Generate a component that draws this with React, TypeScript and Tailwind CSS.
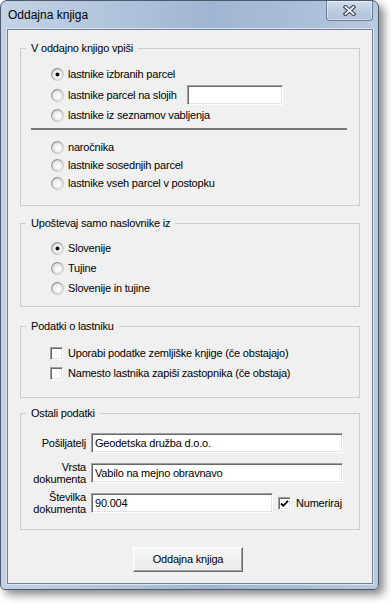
import React from "react"

const Radio = ({ checked }: { checked?: boolean }) => (
  <svg width="13" height="13" viewBox="0 0 13 13" className="shrink-0">
    <defs>
      <linearGradient id="rb" x1="0" y1="0" x2="1" y2="1">
        <stop offset="0" stopColor="#7d7d7d" />
        <stop offset="1" stopColor="#e2e2e2" />
      </linearGradient>
      <radialGradient id="rf" cx="0.6" cy="0.6" r="0.6">
        <stop offset="0" stopColor="#ffffff" />
        <stop offset="1" stopColor="#e4e4e4" />
      </radialGradient>
    </defs>
    <circle cx="6.5" cy="6.5" r="5.8" fill="url(#rf)" stroke="url(#rb)" strokeWidth="1.2" />
    <circle cx="6.5" cy="6.5" r="4.6" fill="none" stroke="#d6d6d6" strokeWidth="0.6" />
    {checked && <circle cx="6.5" cy="6.5" r="2" fill="#111" />}
  </svg>
)

const Check = ({ checked }: { checked?: boolean }) => (
  <div className="w-[13px] h-[13px] shrink-0 bg-white border border-t-[#a0a0a0] border-l-[#a0a0a0] border-r-white border-b-white shadow-[inset_1px_1px_0_#696969,inset_-1px_-1px_0_#e3e3e3] flex items-center justify-center">
    {checked && (
      <svg width="9" height="9" viewBox="0 0 9 9">
        <path d="M1 4.5 L3.3 6.8 L8 1.8" fill="none" stroke="#000" strokeWidth="1.8" />
      </svg>
    )}
  </div>
)

const field =
  "h-[20px] bg-white border border-t-[#a0a0a0] border-l-[#a0a0a0] border-r-white border-b-white shadow-[inset_1px_1px_0_#696969,inset_-1px_-1px_0_#e3e3e3] pl-[3px] flex items-center"

const Group = ({ title, className, children }: { title: string; className: string; children: React.ReactNode }) => (
  <fieldset className={"ml-[12px] w-[340px] border border-[#c9ced3] " + className}>
    <legend className="ml-[5px] px-[5px] leading-[13px]">{title}</legend>
    {children}
  </fieldset>
)

const RadioRow = ({ label, checked, h }: { label: string; checked?: boolean; h: string }) => (
  <div className={"flex items-center gap-[4px] pl-[30px] " + h}>
    <Radio checked={checked} />
    <span>{label}</span>
  </div>
)

export default function App() {
  return (
    <div className="w-[391px] h-[604px] bg-white font-['Liberation_Sans',Arial,sans-serif] text-[11px] tracking-[-0.2px] text-black">
      <div className="w-[379px] h-[590px] rounded-t-[7px] rounded-b-[5px] border border-[#4d5a6b] bg-[linear-gradient(90deg,#c3d3e5_0%,#b0c4dc_30%,#9fb6d2_55%,#a9bed8_80%,#b8cadf_100%)] shadow-[5px_5px_8px_rgba(0,0,0,0.45)] flex flex-col pl-[6px] pr-[5px] pb-[5px]">
        <div className="h-[28px] flex items-start justify-between">
          <span className="pl-[1px] pt-[8px] text-[12px] leading-[12px] tracking-normal text-black">Oddajna knjiga</span>
          <div className="w-[47px] h-[20px] rounded-b-[4px] border border-t-0 border-[#6c7d93] bg-[linear-gradient(180deg,#d2deeb_0%,#bccde0_50%,#aec2da_100%)] shadow-[inset_0_0_0_1px_rgba(255,255,255,0.45)] flex items-center justify-center">
            <svg width="13" height="11" viewBox="0 0 13 11">
              <path d="M2.5 2 L10.5 9 M10.5 2 L2.5 9" stroke="#3d4756" strokeWidth="4" strokeLinecap="square" />
              <path d="M2.5 2 L10.5 9 M10.5 2 L2.5 9" stroke="#f4f6f9" strokeWidth="1.8" strokeLinecap="square" />
            </svg>
          </div>
        </div>
        <div className="flex-1 border border-[#6f7f91] bg-[#f0f0f0] shadow-[0_0_0_1px_#dce6f1] flex flex-col">
          <Group title="V oddajno knjigo vpiši" className="mt-[12px] pt-[9px] pb-[13px]">
            <RadioRow label="lastnike izbranih parcel" checked h="h-[20px]" />
            <div className="flex items-center h-[20px] mt-[1px] pl-[30px]">
              <Radio />
              <span className="w-[123px] pl-[4px]">lastnike parcel na slojih</span>
              <div className={field + " w-[96px]"} />
            </div>
            <RadioRow label="lastnike iz seznamov vabljenja" h="h-[20px]" />
            <div className="ml-[10px] mt-[3px] w-[316px] h-[2px] bg-[#777777]" />
            <div className="mt-[8px]">
              <RadioRow label="naročnika" h="h-[18px]" />
              <RadioRow label="lastnike sosednjih parcel" h="h-[18px]" />
              <RadioRow label="lastnike vseh parcel v postopku" h="h-[18px]" />
            </div>
          </Group>

          <Group title="Upoštevaj samo naslovnike iz" className="mt-[11px] pt-[8px] pb-[8px]">
            <RadioRow label="Slovenije" checked h="h-[20px]" />
            <RadioRow label="Tujine" h="h-[20px]" />
            <RadioRow label="Slovenije in tujine" h="h-[20px]" />
          </Group>

          <Group title="Podatki o lastniku" className="mt-[13px] pt-[10px] pb-[14px]">
            <div className="flex items-center gap-[5px] pl-[29px] h-[20px]">
              <Check />
              <span>Uporabi podatke zemljiške knjige (če obstajajo)</span>
            </div>
            <div className="flex items-center gap-[5px] pl-[29px] h-[20px]">
              <Check />
              <span>Namesto lastnika zapiši zastopnika (če obstaja)</span>
            </div>
          </Group>

          <Group title="Ostali podatki" className="mt-[9px] pt-[13px] pb-[16px]">
            <div className="flex flex-col gap-[10px]">
              <div className="flex items-center h-[20px]">
                <span className="w-[65px] text-right leading-[12px]">Pošiljatelj</span>
                <div className={field + " ml-[5px] w-[252px]"}>Geodetska družba d.o.o.</div>
              </div>
              <div className="flex items-center h-[20px]">
                <span className="w-[65px] text-right leading-[12px]">
                  Vrsta
                  <br />
                  dokumenta
                </span>
                <div className={field + " ml-[5px] w-[252px]"}>Vabilo na mejno obravnavo</div>
              </div>
              <div className="flex items-center h-[20px]">
                <span className="w-[65px] text-right leading-[12px]">
                  Številka
                  <br />
                  dokumenta
                </span>
                <div className={field + " ml-[5px] w-[182px]"}>90.004</div>
                <div className="ml-[5px] flex items-center gap-[5px]">
                  <Check checked />
                  <span>Numeriraj</span>
                </div>
              </div>
            </div>
          </Group>

          <button className="mt-[17px] ml-[125px] w-[110px] h-[25px] bg-[linear-gradient(180deg,#f6f6f6_0%,#ececec_100%)] border border-t-white border-l-white border-r-[#696969] border-b-[#696969] shadow-[inset_-1px_-1px_0_#a0a0a0] text-[11px]">
            Oddajna knjiga
          </button>
        </div>
      </div>
    </div>
  )
}
